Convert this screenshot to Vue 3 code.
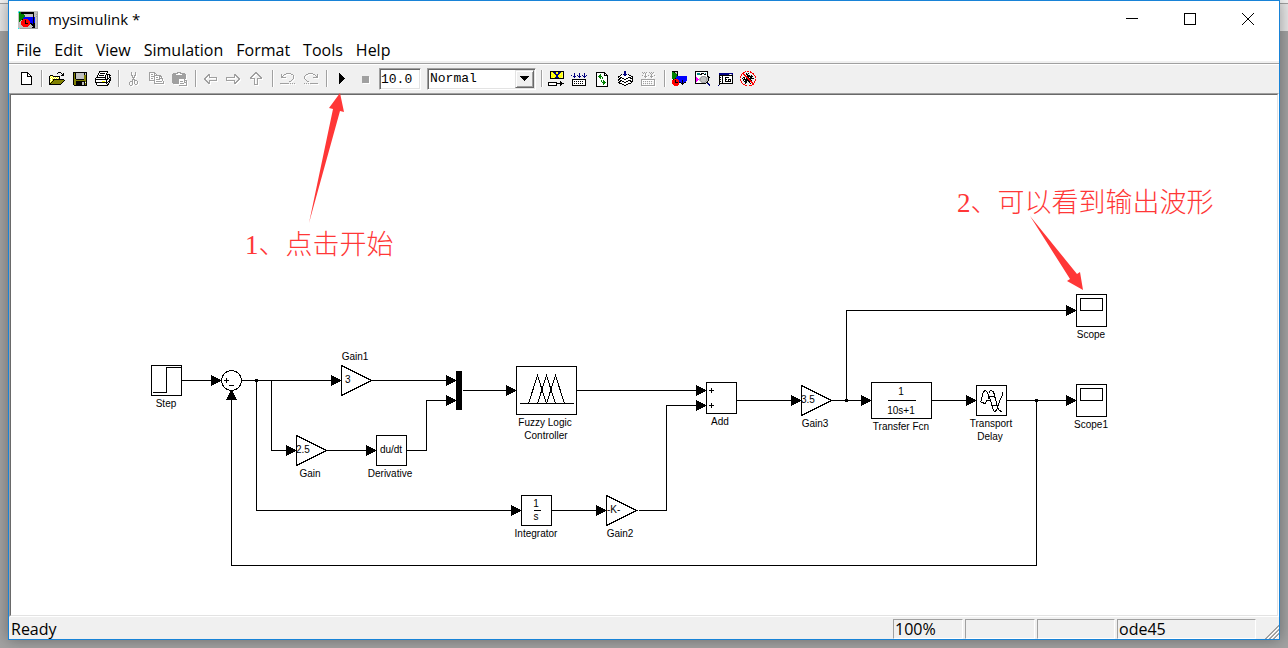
<script setup>
import { ref } from 'vue'

const stopTime = ref('10.0')
const mode = ref('Normal')
const menus = ['File', 'Edit', 'View', 'Simulation', 'Format', 'Tools', 'Help']

const palette = {
  k: '#000000', g: '#a0a0a0', w: '#ffffff', y: '#ffff00', o: '#808000',
  n: '#000080', b: '#0000ff', r: '#ff0000', e: '#008000', t: '#008080',
  m: '#ff00ff', s: '#c0c0c0', c: '#00ffff', p: '#ffff66'
}

const bitmaps = {
  app: [
    'scssssssssssssssssss',
    'ceekkkkkkkkkkkkksssg',
    'seekkkkkkkkkkkkksssg',
    'seeeeessssssssskssgg',
    'seeeeeessssssssksssg',
    'seeeeeesssssssskssgg',
    'seeeeebbbbbbbbbkbssg',
    'seeeebbbbbbbbbbkbssg',
    'seeekrrrrrbbbbbkbssg',
    'seesrrrkrrrbbbbkbssg',
    'sesrrrrkrrrrbbbkbssg',
    'sssrrrrkrrrrbbbkbssg',
    'sssrrrrkkkrrkkbkkssg',
    'sssrrrrrrrrrskkkkssg',
    'ssssrrrrrrrssskkkssg',
    'sssssrrrrrssssskkssg',
    'sssssssssssssskkkssg',
    'csgggggggggggggggggg'
  ],
  new: [
    '', '....kkkkkkk', '....kwwwwwkk', '....kwwwwwkwk', '....kwwwwwkwwk',
    '....kwwwwwkkkkk', '....kwwwwwwwwwk', '....kwwwwwwwwwk', '....kwwwwwwwwwk',
    '....kwwwwwwwwwk', '....kwwwwwwwwwk', '....kwwwwwwwwwk', '....kwwwwwwwwwk', '....kkkkkkkkkkk'
  ],
  open: [
    '', '..........kkk', '.........k...k.k', '..............kk', '..kkk........kkk',
    '.kywykkkkkkk', '.kwywywywywk', '.kywywywywyk', '.kwwykkkkkkkkkkk', '.kywykooooooooook',
    '.kwykooooooooook', '.kykooooooooook', '.kkooooooooook', '.kkkkkkkkkkkk'
  ],
  save: [
    '', '..kkkkkkkkkkkkkk', '..kokssssssssksk', '..kokssssssssksk', '..kokssssssssook', '..kokssssssssook',
    '..kokssssssssook', '..kokssssssssook', '..kookkkkkkkkook', '..kooooooooooook', '..kookkkkkkkkkok',
    '..kookkkkkkssk k', '..kookkkkkksskok', '..kookkkkkksskok', '...kkkkkkkkkkkkk'
  ],
  print: [
    '.....kkkkkkkkk', '.....kwwwwwwwk', '....kwkkkkkwk', '....kwwwwwwwkkkk', '...kwkkkkkwkwkwkk',
    '...kwwwwwwwkwkwk', '..kkkkkkkkkkwkwkk', '.kwwwwwwwwwkwkkwk', '.kkkkkkkkkkkkkwkk', '.kwwwwwwwwwwkwwkk',
    '.kwwwwwwyyywkwkk', '.kkkkkkkkkkkkkwk', '..kwwwwwwwwwkwk', '..kwwwwwwwwwwkk', '...kkkkkkkkkkk'
  ],
  cut: [
    '', '......g...g', '......g...g', '......g...g', '......gg.gg', '.......g.g', '.......ggg',
    '........g', '.......ggg', '.......g.ggg', '.....ggg.g..g', '....g..g.g..g', '....g..g.g..g', '....g..g..gg', '.....gg'
  ],
  copy: [
    '', '.gggggg', '.gwwwwgg', '.gwggwgwg', '.gwwwwggggggg', '.gwggggwwwwggg', '.gwwwwgwggwgwg', '.gwggwgwwwwgggg',
    '.gwwwwgwggggwwg', '.ggggggwwwwwwwg', '......gwggggggwg', '......gwwwwwwwwg', '......gggggggggg'
  ],
  paste: [
    '', '......gggg', '..gggggwwggggg', '.ggggwwwwwwgggg', '.gggggggggggggg', '.gggggggggggggg', '.gggggggggggggg',
    '.gggggggggggggg', '.gggggggwwwwwg', '.gggggggwwwwwggg', '.gggggggwgggwgwg', '.gggggggwwwwwggg', '..ggggggwggggwwg', '........wwwwwwwg', '........gggggggg'
  ],
  back: [
    '', '', '', '......gg', '.....ggg', '....gg.g', '...gg..gggggggg', '..gg..........g', '..gg..........g', '...gg..gggggggg', '....gg.g', '.....ggg', '......gg'
  ],
  forward: [
    '', '', '', '.........gg', '.........ggg', '.........g.gg', '.ggggggggg..gg', '.g...........gg', '.g...........gg', '.ggggggggg..gg', '.........g.gg', '.........ggg', '.........gg'
  ],
  up: [
    '', '.......gg', '......gggg', '.....gg..gg', '....gg....gg', '...gg......gg', '..gg........gg', '..ggggg..ggggg', '......g..g', '......g..g', '......g..g', '......g..g', '......g..g', '......gggg'
  ],
  undo: [
    '', '', '.......ggggg', '..g..gg.....gg', '..g.g.........g', '..gg..........g', '..ggggg.......g', '..............g', '.............g', '............g', '..........gg', '', '.ggggggggg.g.g.g'
  ],
  redo: [
    '', '', '......ggggg', '....gg.....gg..g', '...g.........g.g', '..g...........gg', '..g........ggggg', '..g', '...g', '....g', '.....gg', '', '..g.g.g.gggggggg'
  ],
  play: [
    '', '', '......k', '......kk', '......kkk', '......kkkk', '......kkkkk', '......kkkkkk', '......kkkkk', '......kkkk', '......kkk', '......kk', '......k'
  ],
  stop: ['', '', '', '', '', '......ggggggg', '......ggggggg', '......ggggggg', '......ggggggg', '......ggggggg', '......ggggggg', '......ggggggg'],
  library: [
    '..kkkkkkkkkkkkkk', '..kyynnnyynnnypk', '..kypynnyynnyypk', '..kyyyynnnnypypk', '..kpyyyynnyyyypk', '..kyyyyynnyyyypk', '..kyypynnnnyyppk',
    '..kkkkkkkkkkkkkk', '', '', '............k', 'kkkkkkkkk...kk', 'kwwwwwwwkkkkkkkk', 'kwwwwwwwk...kk', 'kkkkkkkkk...k'
  ],
  build: [
    '', '', '...n....n....n', '...n....n....n', 'n..n..n.n..n.n.n', '..nnn..nnn..nnn', '...n....n....n', '', '.kkkkkkkkkkkkkk', '.kwwwwwwwwwwwwk', '.kwkwkwkwkwkwwk', '.kwwwwwwwwwwwwk', '.kwkwkwkwkwkwwk', '.kwwwwwwwwwwwwk', '.kkkkkkkkkkkkkk'
  ],
  refresh: [
    '', '..kkkkkkkkk', '..kwwwwwwwkk', '..kwwwewwwkwk', '..kwweewwwkkkk', '..kweeeewwwwwk', '..kwweewewwwwk', '..kwwwewewwwwk', '..kwwwwwwwwwwk', '..kwwwwewewwwk', '..kwwwweweewwk', '..kwwwwweeeewk', '..kwwwwwweewwk', '..kwwwwwwewwwk', '..kwwwwwwwwwwk', '..kkkkkkkkkkkk'
  ],
  update: [
    '.......nn', '.......nn', '.......nn', '....k.nnnn.k', '...kwwwnnwwwkk', '.kkwwwwwwwwwwwkk', '.kwkkwwwwwwkkkwk', '..kkwkkwwkkwwkkk', '.kkwwwwkkwwwwwwk', '.kwkkwwwwwwkkkwk', '..kkwkkwwkkwwkkk', '.kkwwwwkkwwwwwk', '..kkkwwwwwwkkk', '.....kkwwkk', '.......kk'
  ],
  subsystem: [
    '', '..g.g.g..g.g.g', '...g.g....g.g', '.....g.....g', '..g..g..g..g..g', '....ggg...ggg', '.....g.....g', '', '.gggggggggggggg', '.g............g', '.g.g.g.g.g.g..g', '.g............g', '.g.g.g.g.g.g..g', '.g............g', '.gggggggggggggg'
  ],
  browser: [
    '.kkkkkk', '.eekssk', '.eeeesk', '.eeeeek', '.eeeeek', '.eeeeebbbbbbbbbb', '.eeeebbbbbbbbbbb', '.eeekbbbbbbbbbbb', '..krrrrbbbbbbbbb', '.rrrkrrrbbbkbbbb', '.rrrkrrrbbbkbbb', '.rrrkkkrkkbkbkk', '.rrrrrrr..kkk', '..rrrrrr...k', '...rrrr'
  ],
  debug: [
    '.kkkkkkkkkkkkk', '.kwwwwwwwwwwwk', '.kwtttwkkkwtwk', '.kwtttkkwwkkwk', '.kwwwwwwwwwwwk', '.kwwwwwsgggswkk', '.kmwwwsgsssggskk', '.kmmwsgsssssgsk', '.kmmmsgsssssgsk', '.kmmwsgsssssgsk', '.kmwwwsgsssgsk', '.kwwwwwsgggskk', '.kkkkkkkkkkk.nn', '..............nn', '...............n'
  ],
  explorer: [
    '', '', '..nnnnnnnnnnnnnn', '..nnnnnnnnnnswsn', '..kkkkkkkkkkkkkk', '..kwwkwwwwwwwwwk', '..kkwkwwkkkkwwwk', '..kwwkwwkwwwwwwk', '..kkwkwwkkwkkkwk', '..kwwkwwkwwkwkwk', '..kkwkwwkkkkkkwk', '..kwwkwwwwwwwwwk', '..kkkkkkkkkkkkkk', '..k', '.n'
  ],
  bug: [
    '.....r.rr.r', '...rr.....rr', '..rr..k.k...rr', '.r.rr.kk.....r', '.r..rr.kkk.k..r', 'r....rrkkkkkk..r', 'r..kk.rrkwkk...r', '..k.kwkrrkkkkk..', 'r..kkkkkrrk....r', 'r..kwkkkkrrk...r', '.r..kkk.kkrr..r', '.r...kk..k.rr.r', '..r..k....k.rr', '...rr.......rr', '.....rr..rrr'
  ]
}

// Turns rows of colour letters into one path per colour.
function toPaths(rows) {
  const out = {}
  rows.forEach((row, y) => {
    let x = 0
    while (x < row.length) {
      const ch = row[x]
      let end = x + 1
      while (end < row.length && row[end] === ch) end++
      if (palette[ch]) out[ch] = (out[ch] || '') + `M${x} ${y}h${end - x}v1h${x - end}z`
      x = end
    }
  })
  return Object.entries(out).map(([ch, d]) => ({ fill: palette[ch], d }))
}
const icons = Object.fromEntries(Object.entries(bitmaps).map(([k, v]) => [k, toPaths(v)]))

const leftTools = [
  [{ id: 'new', label: 'New' }],
  [{ id: 'open', label: 'Open' }, { id: 'save', label: 'Save' }, { id: 'print', label: 'Print' }],
  [{ id: 'cut', label: 'Cut', off: true }, { id: 'copy', label: 'Copy', off: true }, { id: 'paste', label: 'Paste', off: true }],
  [{ id: 'back', label: 'Back', off: true }, { id: 'forward', label: 'Forward', off: true }, { id: 'up', label: 'Up', off: true }],
  [{ id: 'undo', label: 'Undo', off: true }, { id: 'redo', label: 'Redo', off: true }],
  [{ id: 'play', label: 'Start simulation' }, { id: 'stop', label: 'Stop', off: true }]
]
const rightTools = [
  [
    { id: 'library', label: 'Library' }, { id: 'build', label: 'Build' }, { id: 'refresh', label: 'Refresh' },
    { id: 'update', label: 'Update' }, { id: 'subsystem', label: 'Build subsystem', off: true }
  ],
  [
    { id: 'browser', label: 'Library browser' }, { id: 'debug', label: 'Find' },
    { id: 'explorer', label: 'Model explorer' }, { id: 'bug', label: 'Debugger' }
  ]
]

const wires = [
  'M181 380H212', 'M241 380H332', 'M271 380V450H287', 'M256 380V510H512',
  'M326 450H367', 'M406 450H426V400H447', 'M371 380H447', 'M462 390H507',
  'M576 390H697', 'M551 510H597', 'M638 510H666V405H697', 'M736 400H792',
  'M831 400H862', 'M846 400V310H1067', 'M931 400H967', 'M1006 400H1067',
  'M1036 400V565H231V399'
]
const arrows = [
  [221, 380], [341, 380], [296, 450], [521, 510], [376, 450], [456, 400], [456, 380], [516, 390],
  [706, 390], [606, 510], [706, 405], [801, 400], [871, 400], [1076, 310], [976, 400], [1076, 400]
]
const nodes = [[256, 380], [846, 400], [1036, 400]]
const boxes = [
  [151, 365, 30, 30], [376, 435, 30, 30], [516, 366, 60, 48], [521, 495, 30, 30], [706, 382, 30, 31],
  [871, 382, 60, 36], [976, 385, 30, 30], [1076, 294, 30, 32], [1076, 384, 30, 32]
]
const gains = [[341, 380, '3', 4], [296, 450, '2.5', 0], [606, 510, '-K-', 1], [801, 400, '3.5', 0]]
const labels = [
  [166, 407, 'Step'], [355, 360, 'Gain1'], [310, 477, 'Gain'], [390, 477, 'Derivative'],
  [545, 426, 'Fuzzy Logic'], [546, 439, 'Controller'], [536, 537, 'Integrator'], [620, 537, 'Gain2'],
  [720, 425, 'Add'], [815, 427, 'Gain3'], [901, 430, 'Transfer Fcn'], [991, 427, 'Transport'],
  [990, 440, 'Delay'], [1091, 338, 'Scope'], [1091, 428, 'Scope1'],
  [391, 453, 'du/dt'], [536, 507, '1'], [536, 520, 's'], [901, 395, '1'], [901, 414, '10s+1']
]
</script>

<template>
  <div class="desktop">
    <main class="window">
      <header class="titlebar">
        <svg class="app-icon" viewBox="0 0 20 18" aria-hidden="true">
          <path v-for="p in icons.app" :key="p.fill" :d="p.d" :fill="p.fill" />
        </svg>
        <h1>mysimulink *</h1>
        <div class="controls">
          <button type="button" aria-label="Minimize"><svg viewBox="0 0 13 13"><path d="M0 5H12V6H0Z" /></svg></button>
          <button type="button" aria-label="Maximize"><svg viewBox="0 0 13 13"><path d="M0 0H12V12H0ZM1 1V11H11V1Z" fill-rule="evenodd" /></svg></button>
          <button type="button" aria-label="Close"><svg class="smooth" viewBox="0 0 13 13"><path d="M0 0L12 12M12 0L0 12" fill="none" stroke="#000" /></svg></button>
        </div>
      </header>

      <nav class="menubar">
        <button v-for="m in menus" :key="m" type="button">{{ m }}</button>
      </nav>

      <div class="toolbar">
        <template v-for="(group, i) in leftTools" :key="'l' + i">
          <span v-if="i" class="sep"></span>
          <button v-for="t in group" :key="t.id" type="button" :class="{ off: t.off }" :disabled="t.off" :aria-label="t.label">
            <svg viewBox="0 0 16 16"><path v-for="p in icons[t.id]" :key="p.fill" :d="p.d" :fill="p.fill" /></svg>
          </button>
        </template>
        <input v-model="stopTime" class="time" type="text" aria-label="Stop time" />
        <div class="combo">
          <select v-model="mode" aria-label="Simulation mode">
            <option>Normal</option>
            <option>Accelerator</option>
          </select>
          <span class="drop"><svg viewBox="0 0 9 5"><path d="M0 0H9V1H8V2H7V3H6V4H5V5H4V4H3V3H2V2H1V1H0Z" /></svg></span>
        </div>
        <template v-for="(group, i) in rightTools" :key="'r' + i">
          <span class="sep"></span>
          <button v-for="t in group" :key="t.id" type="button" :class="{ off: t.off }" :disabled="t.off" :aria-label="t.label">
            <svg viewBox="0 0 16 16"><path v-for="p in icons[t.id]" :key="p.fill" :d="p.d" :fill="p.fill" /></svg>
          </button>
        </template>
      </div>

      <section class="canvas">
        <div class="sheet">
          <svg class="diagram" role="img" aria-label="Model diagram">
            <g class="line" transform="translate(-10.5 -94.5)">
              <path v-for="d in wires" :key="d" :d="d" />
              <rect v-for="b in boxes" :key="b.join()" :x="b[0]" :y="b[1]" :width="b[2]" :height="b[3]" />
              <path v-for="g in gains" :key="g[0]" :d="`M${g[0]} ${g[1] - 15}V${g[1] + 15}L${g[0] + 30} ${g[1]}Z`" />
              <circle cx="231" cy="380" r="10" />
              <path d="M152 392H166V367H181" />
              <path d="M519 403H573M528 403L537 375L546 403M537 403L546 375L555 403M546 403L555 375L564 403" />
              <path d="M533 510H540M887 400H915" />
              <rect x="1080" y="298" width="22" height="12" />
              <rect x="1080" y="388" width="22" height="12" />
              <path d="M980 402L983 391L985 390L987 392L990 400H986L985 403L981 402M987 396H993M988 394V398M988 393L990 390L993 391L995 399L998 409L1002 412M990 399L992 408L994 411L996 410L999 401L1002 394V391M991 405H997" />
            </g>
            <g transform="translate(-11 -95)">
              <g class="solid">
                <path v-for="a in arrows" :key="a.join()" :d="`M${a[0]} ${a[1]}v1L${a[0] - 10} ${a[1] + 6}v-11Z`" />
                <path d="M231 390h1L237 400H226Z" />
                <rect x="456" y="371" width="6" height="39" />
                <rect v-for="n in nodes" :key="n[0]" :x="n[0] - 1" :y="n[1] - 1" width="3" height="3" />
                <path d="M224 380h5v1h-5zM226 378h1v5h-1zM229 385h5v1h-5z" />
                <path d="M709 390h5v1h-5zM711 388h1v5h-1zM709 405h5v1h-5zM711 403h1v5h-1z" />
              </g>
              <g class="label">
                <text v-for="l in labels" :key="l.join()" :x="l[0]" :y="l[1]" text-anchor="middle">{{ l[2] }}</text>
                <text v-for="g in gains" :key="g[2]" :x="g[0] + g[3]" :y="g[1] + 3">{{ g[2] }}</text>
              </g>
              <g class="note">
                <path d="M340 93L344 112L340 111L309 223L333 109L329 108Z" />
                <path d="M1083 290L1067 281L1070 279L1030 216L1077 274L1080 272Z" />
                <text x="245" y="254">1、点击开始</text>
                <text x="957" y="212">2、可以看到输出波形</text>
              </g>
            </g>
          </svg>
        </div>
      </section>

      <footer class="status">
        <span class="ready">Ready</span>
        <span class="pane zoom">100%</span>
        <span class="pane blank"></span>
        <span class="pane wide"></span>
        <span class="pane solver">ode45</span>
        <svg class="grip" viewBox="0 0 14 14" aria-hidden="true">
          <path d="M2 14L14 2M6 14L14 6M10 14L14 10" stroke="#fff" />
          <path d="M0 14L14 0M1 14L14 1M4 14L14 4M5 14L14 5M8 14L14 8M9 14L14 9" stroke="#a0a0a0" />
        </svg>
      </footer>
    </main>
  </div>
</template>

<style>
body { overflow: hidden; }
</style>

<style scoped>
* { box-sizing: border-box; }
.desktop {
  height: 100vh;
  padding: 0 8px 8px;
  background: linear-gradient(#f4f4f4 0 3px, #a0a0a0 3px 4px, #e6e6e6 4px 31px, #a2a2a2 31px);
  font-family: "Open Sans", "Noto Sans", sans-serif;
  font-size: 16px;
  color: #000;
}
.window {
  display: flex;
  flex-direction: column;
  height: 100%;
  border: 1px solid #1883d7;
  background: #f0f0f0;
  box-shadow: 0 0 14px rgba(0, 0, 0, 0.35);
}
button { padding: 0; border: 0; background: none; font: inherit; color: inherit; }
svg { display: block; shape-rendering: crispEdges; }
.titlebar { display: flex; align-items: center; height: 37px; padding-left: 9px; background: #fff; }
.app-icon { width: 20px; height: 18px; }
h1 { margin: 0 0 2px 10px; font-size: 15px; font-weight: 400; }
.controls { display: flex; margin: 0 2px 0 auto; height: 100%; }
.controls button { display: flex; align-items: center; justify-content: center; width: 58px; }
.controls svg { width: 13px; height: 13px; overflow: visible; }
.controls .smooth { shape-rendering: auto; }
.menubar { display: flex; gap: 13px; height: 23px; padding-left: 7px; background: #fff; }
.menubar button { line-height: 22px; }
.toolbar {
  display: flex;
  align-items: center;
  height: 30px;
  margin-top: 2px;
  padding: 0 5px;
  border-top: 1px solid #a0a0a0;
  box-shadow: inset 0 1px #fff;
}
.toolbar > button { display: flex; align-items: center; width: 23px; height: 24px; padding-left: 3px; }
.toolbar > button svg { width: 16px; height: 16px; overflow: visible; }
.off svg { filter: drop-shadow(1px 1px 0 #fff); }
.sep { width: 8px; height: 17px; border-left: 4px solid transparent; background: linear-gradient(90deg, #a0a0a0 1px, #fff 1px 2px, transparent 2px) padding-box no-repeat; }
.time, select {
  border: 1px solid;
  border-color: #a0a0a0 #fff #fff #a0a0a0;
  border-radius: 0;
  outline: 0;
  background: #fff;
  box-shadow: inset 1px 1px #696969, inset -1px -1px #e3e3e3;
  font: 13px/18px "Liberation Mono", monospace;
  color: #000;
}
.time { width: 42px; height: 22px; margin: 0 6px 0 3px; padding: 2px 0 0 1px; }
.combo { position: relative; width: 109px; height: 22px; margin-right: 1px; }
select { display: block; width: 100%; height: 100%; padding: 0 2px; appearance: none; }
.drop {
  position: absolute;
  top: 2px;
  right: 2px;
  bottom: 2px;
  display: flex;
  align-items: center;
  justify-content: center;
  width: 19px;
  border: 1px solid;
  border-color: #e3e3e3 #696969 #696969 #e3e3e3;
  background: #f0f0f0;
  box-shadow: inset 1px 1px #fff, inset -1px -1px #a0a0a0;
  pointer-events: none;
}
.drop svg { width: 9px; height: 5px; }
.canvas { flex: 1; min-height: 0; border: 1px solid; border-color: #a0a0a0 #fff #fff #a0a0a0; }
.sheet { height: 100%; border: 1px solid; border-color: #696969 #e3e3e3 #e3e3e3 #696969; background: #fff; }
.diagram { width: 100%; height: 100%; overflow: visible; }
.line { fill: none; stroke: #000; }
.solid { fill: #000; }
.label { font: 10px "Liberation Sans", Arial, sans-serif; }
.note { fill: #ff3737; font: 300 27px "Liberation Serif", "Noto Sans CJK SC", serif; }
.note path { shape-rendering: auto; }
.status { display: flex; align-items: flex-end; gap: 2px; height: 22px; padding-left: 2px; line-height: 20px; }
.ready { margin-right: auto; }
.pane { height: 20px; padding-left: 1px; border: 1px solid; border-color: #a0a0a0 #fff #fff #a0a0a0; line-height: 18px; }
.zoom, .blank { width: 70px; }
.wide { width: 78px; }
.solver { width: 139px; }
.grip { width: 14px; height: 14px; margin-left: 7px; }
</style>
